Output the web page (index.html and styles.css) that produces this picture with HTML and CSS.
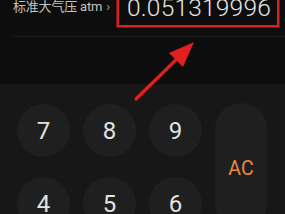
FILE: index.html
```html
<!DOCTYPE html>
<html>
<head>
<meta charset="utf-8">
<link rel="stylesheet" href="styles.css">
</head>
<body>
<div class="screen">
  <header class="display">
    <div class="row">
      <div class="unit">标准大气压 atm <span class="chev">›</span></div>
      <div class="value-box"><span class="value">0.051319996</span></div>
    </div>
    <div class="sep"></div>
  </header>
  <main class="keypad">
    <div class="key">7</div>
    <div class="key">8</div>
    <div class="key">9</div>
    <div class="key ac">AC</div>
    <div class="key">4</div>
    <div class="key">5</div>
    <div class="key">6</div>
  </main>
  <svg class="arrow" width="285" height="214" viewBox="0 0 285 214">
    <line x1="136" y1="99" x2="181" y2="55" stroke="#e31e1e" stroke-width="3.2" stroke-linecap="round"/>
    <polygon points="194,42 169,53 183,67" fill="#e31e1e"/>
  </svg>
</div>
</body>
</html>
```
FILE: styles.css
```css
* { box-sizing: border-box; }
html, body { margin: 0; padding: 0; }
body {
  background: #0d0d0d;
  font-family: Roboto, "Noto Sans CJK SC", sans-serif;
  width: 285px;
  height: 214px;
  overflow: hidden;
}
.screen {
  position: relative;
  width: 285px;
  height: 214px;
  overflow: hidden;
}
.display {
  display: flex;
  flex-direction: column;
  height: 84px;
  background: #0d0d0d;
  padding-left: 13px;
}
.row {
  display: flex;
  align-items: flex-start;
  height: 39px;
  margin-top: -12px;
}
.unit {
  flex: none;
  color: #c4c4c4;
  font-size: 13px;
  line-height: 16px;
  margin-top: 11px;
  white-space: nowrap;
  letter-spacing: -0.2px;
}
.chev {
  font-size: 13px;
  margin-left: 1px;
  color: #aaa;
}
.value-box {
  flex: none;
  margin-left: auto;
  margin-right: 6px;
  width: 162px;
  height: 39px;
  border: 2px solid #d42222;
  box-shadow: 0 0 0 1px #7a1515;
  display: flex;
  align-items: flex-end;
  justify-content: center;
  padding-bottom: 5px;
}
.value {
  color: #e6e6e6;
  font-family: Roboto, sans-serif;
  font-weight: 300;
  font-size: 24.5px;
  line-height: 24px;
  letter-spacing: 0.2px;
  margin-left: 2px;
}
.sep {
  height: 1px;
  background: #1c1c1c;
  margin-top: 9px;
}
.keypad {
  background: #171717;
  height: 130px;
  padding: 20px 0 0 17px;
  display: grid;
  grid-template-columns: 53px 53px 53px 52px;
  grid-template-rows: 53px 53px;
  column-gap: 13px;
  row-gap: 20px;
}
.key {
  background: #1f1f1f;
  border-radius: 50%;
  color: #e2e2e2;
  font-size: 24px;
  display: flex;
  align-items: center;
  justify-content: center;
}
.key.ac {
  grid-column: 4;
  grid-row: 1 / span 2;
  border-radius: 26px;
  margin-top: -1px;
  color: #e88b3e;
  font-size: 19.5px;
  padding-top: 4px;
  align-items: center;
}
.arrow {
  position: absolute;
  left: 0;
  top: 0;
  pointer-events: none;
}
```
